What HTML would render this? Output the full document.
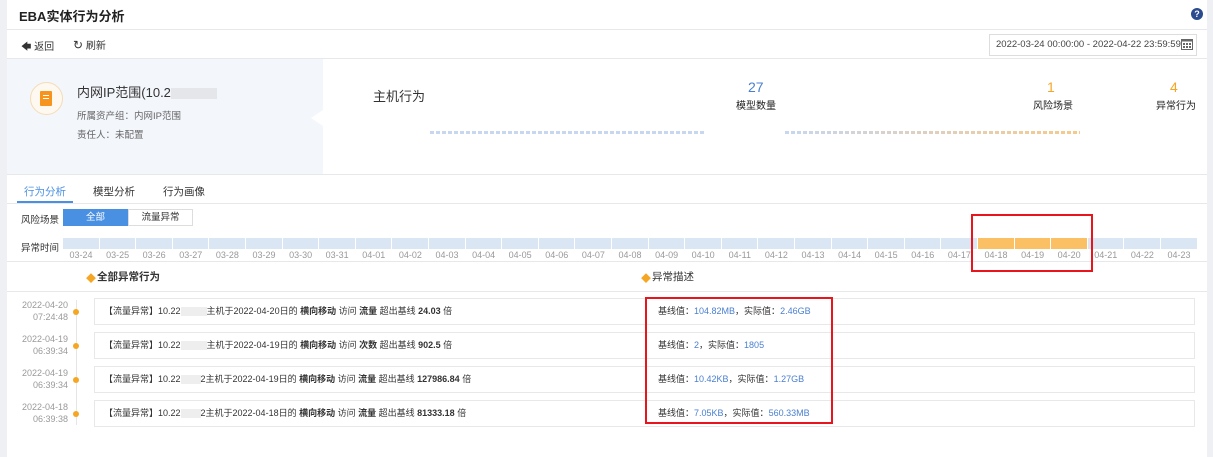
<!DOCTYPE html><html><head><meta charset="utf-8"><style>
*{margin:0;padding:0;box-sizing:border-box}
body{width:1213px;height:457px;overflow:hidden;background:#fff;font-family:"Liberation Sans","Noto Sans CJK SC",sans-serif;color:#333;position:relative;font-size:10px}
.a{position:absolute;white-space:nowrap}
.hl{position:absolute;left:7px;right:6px;height:1px;background:#e6e8eb}
.bar{position:absolute;top:238px;height:11px;background:#dbe6f5}
.lab{position:absolute;top:250px;font-size:9px;color:#999;width:36px;text-align:center}
.card{position:absolute;left:94px;width:1101px;height:27px;border:1px solid #e8e8e8;font-size:9px;line-height:25px;padding-left:9px}
.tm{position:absolute;left:10px;width:58px;text-align:right;font-size:9px;color:#999;line-height:12px}
.dot{position:absolute;left:73px;width:6px;height:6px;border-radius:3px;background:#f5a623}
.bk{display:inline-block;width:26px;height:9px;background:#eee;vertical-align:middle}
b{font-weight:bold}
.bl{color:#4a7fd0}
</style></head><body>
<div class="a" style="left:0;top:0;width:7px;height:457px;background:#eef0f3"></div>
<div class="a" style="right:0;top:0;width:6px;height:457px;background:#eef0f3"></div>
<div class="a" style="left:19px;top:6px;font-size:13px;font-weight:bold;color:#222">EBA实体行为分析</div>
<div class="a" style="left:1191px;top:8px;width:12px;height:12px;border-radius:6px;background:#2a4b8d;color:#fff;font-size:9px;font-weight:bold;text-align:center;line-height:12px">?</div>
<div class="hl" style="top:29px"></div>
<div class="a" style="left:21px;top:38px;font-size:10px">🡄 返回</div>
<div class="a" style="left:73px;top:37px;font-size:10px"><span style="font-size:12px">↻</span> 刷新</div>
<div class="a" style="left:989px;top:34px;width:208px;height:22px;border:1px solid #ddd;font-size:9.5px;line-height:20px;padding-left:6px;color:#444">2022-03-24 00:00:00 - 2022-04-22 23:59:59</div>
<svg class="a" style="left:1181px;top:38px" width="12" height="12"><rect x="0.5" y="1.5" width="11" height="10" fill="none" stroke="#666"/><rect x="0.5" y="1.5" width="11" height="2" fill="#666"/><g fill="#666"><rect x="2" y="5" width="2" height="2"/><rect x="5" y="5" width="2" height="2"/><rect x="8" y="5" width="2" height="2"/><rect x="2" y="8" width="2" height="2"/><rect x="5" y="8" width="2" height="2"/><rect x="8" y="8" width="2" height="2"/></g></svg>
<div class="hl" style="top:58px"></div>
<div class="a" style="left:7px;top:59px;width:316px;height:115px;background:#f3f6fb"></div>
<div class="a" style="left:311px;top:110px;width:0;height:0;border-top:8px solid transparent;border-bottom:8px solid transparent;border-right:12px solid #fff"></div>
<div class="a" style="left:30px;top:82px;width:33px;height:33px;border-radius:17px;border:1px solid #f5dcb4;background:#fdf8f0"></div>
<div class="a" style="left:40px;top:91px;width:12px;height:15px;background:#f7941d;border-radius:1px"></div>
<div class="a" style="left:43px;top:95px;width:6px;height:1px;background:#fff"></div>
<div class="a" style="left:43px;top:98px;width:6px;height:1px;background:#fff"></div>
<div class="a" style="left:77px;top:82px;font-size:13px;color:#333">内网IP范围(10.2<span style="display:inline-block;width:46px;height:11px;background:#e4e6ea;vertical-align:middle"></span></div>
<div class="a" style="left:77px;top:108px;font-size:9.5px;color:#666">所属资产组：内网IP范围</div>
<div class="a" style="left:77px;top:127px;font-size:9.5px;color:#666">责任人：未配置</div>
<div class="a" style="left:373px;top:86px;font-size:13px">主机行为</div>
<div class="a" style="left:748px;top:79px;font-size:14px;color:#4a7fd0">27</div>
<div class="a" style="left:736px;top:97px;font-size:10px;color:#222">模型数量</div>
<div class="a" style="left:1047px;top:79px;font-size:14px;color:#f5a623">1</div>
<div class="a" style="left:1033px;top:97px;font-size:10px;color:#222">风险场景</div>
<div class="a" style="left:1170px;top:79px;font-size:14px;color:#f5a623">4</div>
<div class="a" style="left:1156px;top:97px;font-size:10px;color:#222">异常行为</div>
<div class="a" style="left:430px;top:131px;width:276px;height:3px;background:repeating-linear-gradient(90deg,#c7d7f0 0 4px,transparent 4px 6px)"></div>
<div class="a" style="left:785px;top:131px;width:295px;height:3px;background:linear-gradient(90deg,#c7d7f0,#f7c98a);-webkit-mask:repeating-linear-gradient(90deg,#000 0 4px,transparent 4px 6px);mask:repeating-linear-gradient(90deg,#000 0 4px,transparent 4px 6px)"></div>
<div class="hl" style="top:174px"></div>
<div class="a" style="left:24px;top:184px;font-size:10.5px;color:#4a90e2">行为分析</div>
<div class="a" style="left:17px;top:201px;width:56px;height:2px;background:#4a90e2"></div>
<div class="a" style="left:93px;top:184px;font-size:10.5px">模型分析</div>
<div class="a" style="left:163px;top:184px;font-size:10.5px">行为画像</div>
<div class="hl" style="top:203px"></div>
<div class="a" style="left:21px;top:212px;font-size:9.5px">风险场景</div>
<div class="a" style="left:63px;top:209px;width:65px;height:17px;background:#4a90e2;color:#fff;font-size:9.5px;text-align:center;line-height:17px">全部</div>
<div class="a" style="left:128px;top:209px;width:65px;height:17px;border:1px solid #ddd;font-size:9.5px;text-align:center;line-height:15px">流量异常</div>
<div class="a" style="left:21px;top:240px;font-size:9.5px">异常时间</div>
<div id="tl"></div>
<div class="hl" style="top:261px"></div>
<div class="a" style="left:86px;top:270px;font-size:10px;color:#f5a623">◆</div>
<div class="a" style="left:97px;top:269px;font-size:10.5px;font-weight:bold">全部异常行为</div>
<div class="a" style="left:641px;top:270px;font-size:10px;color:#f5a623">◆</div>
<div class="a" style="left:652px;top:269px;font-size:10.5px">异常描述</div>
<div class="hl" style="top:291px"></div>
<div class="a" style="left:76px;top:300px;width:1px;height:125px;background:#e6e6e6"></div>
<div class="tm" style="top:299px">2022-04-20<br>07:24:48</div><div class="dot" style="top:309px"></div>
<div class="card" style="top:298px">【流量异常】10.22<span class="bk"></span>主机于2022-04-20日的 <b>横向移动</b> 访问 <b>流量</b> 超出基线 <b>24.03</b> 倍<span class="a" style="left:563px">基线值：<span class="bl">104.82MB</span>，实际值：<span class="bl">2.46GB</span></span></div>
<div class="tm" style="top:333px">2022-04-19<br>06:39:34</div><div class="dot" style="top:343px"></div>
<div class="card" style="top:332px">【流量异常】10.22<span class="bk"></span>主机于2022-04-19日的 <b>横向移动</b> 访问 <b>次数</b> 超出基线 <b>902.5</b> 倍<span class="a" style="left:563px">基线值：<span class="bl">2</span>，实际值：<span class="bl">1805</span></span></div>
<div class="tm" style="top:367px">2022-04-19<br>06:39:34</div><div class="dot" style="top:377px"></div>
<div class="card" style="top:366px">【流量异常】10.22<span class="bk" style="width:20px"></span>2主机于2022-04-19日的 <b>横向移动</b> 访问 <b>流量</b> 超出基线 <b>127986.84</b> 倍<span class="a" style="left:563px">基线值：<span class="bl">10.42KB</span>，实际值：<span class="bl">1.27GB</span></span></div>
<div class="tm" style="top:401px">2022-04-18<br>06:39:38</div><div class="dot" style="top:411px"></div>
<div class="card" style="top:400px">【流量异常】10.22<span class="bk" style="width:20px"></span>2主机于2022-04-18日的 <b>横向移动</b> 访问 <b>流量</b> 超出基线 <b>81333.18</b> 倍<span class="a" style="left:563px">基线值：<span class="bl">7.05KB</span>，实际值：<span class="bl">560.33MB</span></span></div>
<div class="a" style="left:971px;top:214px;width:122px;height:58px;border:2px solid #e8161c"></div>
<div class="a" style="left:645px;top:297px;width:188px;height:127px;border:2px solid #e8161c"></div>
<script>
var d=["03-24","03-25","03-26","03-27","03-28","03-29","03-30","03-31","04-01","04-02","04-03","04-04","04-05","04-06","04-07","04-08","04-09","04-10","04-11","04-12","04-13","04-14","04-15","04-16","04-17","04-18","04-19","04-20","04-21","04-22","04-23"],h="";
for(var i=0;i<31;i++){var x=63+i*36.6;var o=i>=25&&i<=27;h+='<div class="bar" style="left:'+x+'px;width:35.6px;'+(o?'background:#fcc064':'')+'"></div><div class="lab" style="left:'+(x)+'px">'+d[i]+'</div>';}
document.getElementById('tl').innerHTML=h;
</script>
</body></html>
